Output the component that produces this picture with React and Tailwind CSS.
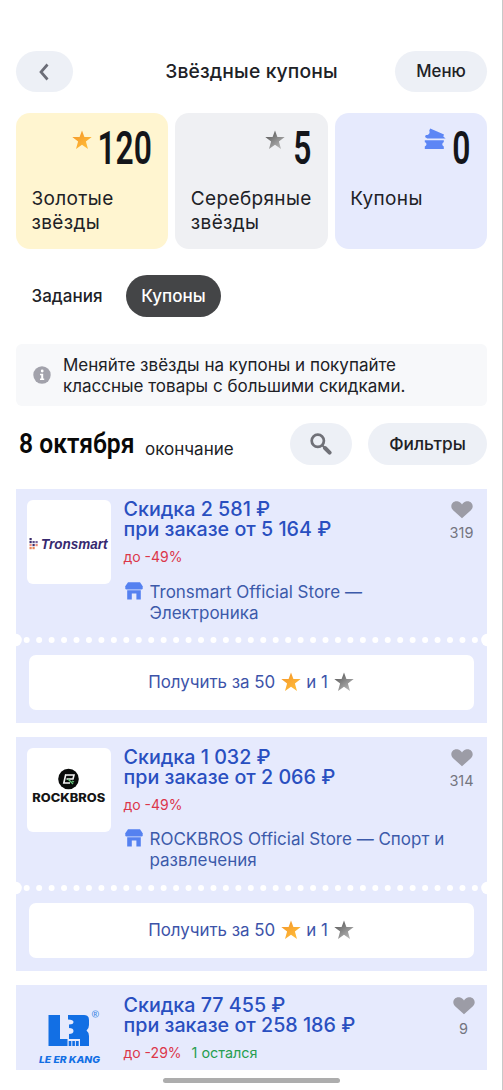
const DOTS = Array.from({ length: 37 }, (_, i) => 10.7 + i * 12.45);

const coupons = [
  {
    id: 1,
    logo: TronsmartLogo,
    discount: 'Скидка 2 581 ₽',
    order: 'при заказе от 5 164 ₽',
    percent: 'до -49%',
    store: ['Tronsmart Official Store —', 'Электроника'],
    likes: 319,
  },
  {
    id: 2,
    logo: RockbrosLogo,
    discount: 'Скидка 1 032 ₽',
    order: 'при заказе от 2 066 ₽',
    percent: 'до -49%',
    store: ['ROCKBROS Official Store — Спорт и', 'развлечения'],
    storeClass: 'mt-[15px]',
    likes: 314,
  },
];

function Star({ gold, className }) {
  const id = gold ? 'star-gold' : 'star-silver';
  return (
    <svg viewBox="0 0 20 20" className={`shrink-0 ${className}`}>
      <defs>
        <linearGradient id={id} x1="0" y1="0" x2="0.8" y2="1">
          <stop offset="0.2" stopColor={gold ? '#f59b2c' : '#626262'} />
          <stop offset="0.9" stopColor={gold ? '#ffba38' : '#b0b0b0'} />
        </linearGradient>
      </defs>
      <path
        fill={`url(#${id})`}
        d="M10 0.4 12.4 7H19.7L13.9 11.5 16 19 10 14.7 4 19 6.1 11.5 0.3 7H7.6Z"
      />
    </svg>
  );
}

function TicketsIcon() {
  return (
    <svg viewBox="0 0 22 22" className="w-[22px] h-[22px] shrink-0" fill="#5d86f5">
      <path d="M6.2 0.6 20 6.6 19.3 8.4 21.6 10.6H3.2L1 8.9 1.8 7C4.2 7.6 6.6 5.2 5.2 2.8Z" />
      <path d="M0.8 12.2H19.8V14.3C17.8 14.8 17.8 17.9 19.8 18.4V21H0.8V18.4C3 17.9 3 14.8 0.8 14.3Z" />
    </svg>
  );
}

function StoreIcon() {
  return (
    <svg viewBox="0 0 18 18" className="w-[18px] h-[18px] shrink-0" fill="#5581f0">
      <path d="M3 0.3H15L17.7 4.2V6.2Q17.7 7.4 16.2 7.4H1.8Q0.3 7.4 0.3 6.2V4.2Z" />
      <path d="M2.2 8.2H15.8V17.5H11.4V11.4H6.8V17.5H2.2Z" />
    </svg>
  );
}

function Heart() {
  return (
    <svg viewBox="0 0 22 18" className="w-[22px] h-[18px]" fill="#9c9ca6">
      <path d="M11 17.3 2.1 9.2C-2.3 4.7 2.2-1.2 7.3 0.6 9 1.1 10.2 2.2 11 3.5 11.8 2.2 13 1.1 14.7 0.6 19.8-1.2 24.3 4.7 19.9 9.2Z" />
    </svg>
  );
}

function TronsmartLogo() {
  const cells = [
    [0, 0, '#3a2d6d'],
    [0, 1, '#3a2d6d'], [1, 1, '#5b4a86'], [2, 1, '#75639a'],
    [0, 2, '#eb8b7c'], [1, 2, '#3a2d6d'], [2, 2, '#eb8b7c'],
    [0, 3, '#e98559'], [1, 3, '#e98559'],
  ];
  return (
    <svg viewBox="0 0 84 84" className="w-full h-full">
      {cells.map(([x, y, color]) => (
        <rect key={`${x}-${y}`} x={2.5 + x * 3} y={38 + y * 3} width="2.2" height="2.2" fill={color} />
      ))}
      <text x="14" y="48.9" textLength="66.5" lengthAdjust="spacingAndGlyphs" fontFamily="Liberation Sans" fontSize="15.3" fontWeight="700" fontStyle="italic" fill="#36296f">Tronsmart</text>
    </svg>
  );
}

function RockbrosLogo() {
  return (
    <svg viewBox="0 0 84 84" className="w-full h-full">
      <circle cx="41.5" cy="31" r="10.3" fill="#090b0a" />
      <path d="M38.3 27H47L46 31H39.5M38.8 26.2 36.8 35H43" fill="none" stroke="#f4f4f4" strokeWidth="1.6" />
      <path d="M41 31 46 36M45 33 47 34" stroke="#69c77b" strokeWidth="1.3" />
      <text x="5.3" y="53.8" textLength="73" lengthAdjust="spacingAndGlyphs" fontFamily="Inter" fontSize="11.2" fontWeight="800" fill="#151515">ROCKBROS</text>
    </svg>
  );
}

function LeErKangLogo() {
  return (
    <svg viewBox="0 0 84 84" className="w-full h-full">
      <g fill="#126fe4">
        <path d="M21.5 19H33V43H40.5V50H21.5Z" />
        <path d="M41 19H57Q62 19 62 24V29Q62 32.5 59.5 34.5Q62 36.5 62 40V50H53V43H42V38Q46.5 38 46.5 35T42 32V28.5Q46.5 28.5 46.5 26T41 23.5Z" />
        <path d="M41.7 45H44.3V50H41.7ZM45.3 45H47.9V50H45.3ZM48.9 45H51.7V50H48.9Z" />
      </g>
      <circle cx="68.5" cy="18" r="3.3" fill="none" stroke="#5f9de9" strokeWidth="0.8" />
      <text x="66.6" y="20" fontFamily="Inter" fontSize="5.3" fontWeight="600" fill="#3f87e4">R</text>
      <text x="12" y="66.6" textLength="61" lengthAdjust="spacingAndGlyphs" fontFamily="Inter" fontSize="9.5" fontWeight="800" fontStyle="italic" fill="#126fe4">LE ER KANG</text>
    </svg>
  );
}

function Balance({ className, icon, value, valueClass, lines }) {
  return (
    <div className={`flex-1 min-w-0 rounded-[14px] px-[15.5px] pt-[15px] ${className}`}>
      <div className="flex justify-end items-start h-[58.5px]">
        {icon}
        <span className={`flex justify-end h-10 shrink-0 ${valueClass}`}>
          <span className="origin-right scale-x-[0.69] font-['Roboto'] font-semibold text-[46px] leading-[40px] text-[#14151a]">{value}</span>
        </span>
      </div>
      <div className="text-[19px] leading-[24px] tracking-[0.35px]">
        {lines.map((line) => (
          <div key={line} className="whitespace-nowrap">{line}</div>
        ))}
      </div>
    </div>
  );
}

function Perforation() {
  return (
    <svg viewBox="0 0 471 14" className="block w-[471px] h-[14px]" fill="#fff">
      <circle cx="-0.5" cy="7" r="6.3" />
      {DOTS.map((x) => (
        <circle key={x} cx={x} cy="7" r="3" />
      ))}
      <circle cx="471.5" cy="7" r="6.3" />
    </svg>
  );
}

function CouponTop({ discount, order, percent, left, likes, likesClass = 'w-[51px]', children }) {
  return (
    <>
      <div className="ml-[13px] -mt-px flex-1 min-w-0">
        <div className="text-[19.7px] leading-[20px] font-medium text-[#294fc0] whitespace-nowrap">
          <div>{discount}</div>
          <div>{order}</div>
        </div>
        <div className="mt-[9px] flex gap-[10px] text-[14px] leading-[18px] text-[#dc364a]">
          <span>{percent}</span>
          {left && <span className="text-[14.4px] text-[#279e50]">{left}</span>}
        </div>
        {children}
      </div>
      <div className={`shrink-0 pt-[1px] flex flex-col items-center text-[14.5px] leading-[18px] text-[#74757f] ${likesClass}`}>
        <Heart />
        <span className="mt-[5px]">{likes}</span>
      </div>
    </>
  );
}

function Coupon({ coupon }) {
  const Logo = coupon.logo;
  return (
    <div className="h-[234px] bg-[#e6eafd]">
      <div className="flex h-[144px] pt-[11px] pl-[10.5px]">
        <div className="w-[84px] h-[84px] shrink-0 rounded-[6px] bg-white">
          <Logo />
        </div>
        <CouponTop {...coupon}>
          <div className={`ml-[1px] flex gap-[7px] text-[17px] leading-[21px] text-[#3c5aaa] ${coupon.storeClass || 'mt-[16px]'}`}>
            <StoreIcon />
            <div className="whitespace-nowrap">
              {coupon.store.map((line) => (
                <div key={line}>{line}</div>
              ))}
            </div>
          </div>
        </CouponTop>
      </div>
      <Perforation />
      <button className="mt-2 mx-[13px] w-[445px] h-[55px] rounded-[7px] bg-white flex items-center justify-center text-[16.9px] text-[#3d53a9]">
        <span>Получить за 50</span>
        <Star gold className="w-5 h-5 mb-[2px] ml-[6px] mr-[5px]" />
        <span>и 1</span>
        <Star className="w-5 h-5 mb-[2px] ml-[6px] mr-[1px]" />
      </button>
    </div>
  );
}

export default function App() {
  return (
    <div className="h-[1090px] w-[503px] overflow-hidden bg-white border-r border-[#c8c8c8] pl-4 pr-[15px] pt-[51px] font-['Inter',sans-serif] text-[#202126]">
      {/* Header */}
      <header className="flex items-center justify-between h-[41px]">
        <button className="w-[57px] h-[41px] pr-[2px] rounded-full bg-[#edf0f6] flex items-center justify-center">
          <svg viewBox="0 0 10 18" className="w-[10px] h-[18px]" fill="none" stroke="#6b6d77" strokeWidth="2.7">
            <path d="M8.5 1.5 2 9 8.5 16.5" />
          </svg>
        </button>
        <h1 className="ml-[35px] mb-[1px] text-[19.3px] tracking-[0.15px] font-medium">Звёздные купоны</h1>
        <button className="w-[92px] h-[41px] rounded-full bg-[#edf0f6] text-[16.8px] font-medium">Меню</button>
      </header>

      {/* Balances */}
      <div className="mt-[21px] h-[136px] flex gap-[7px]">
        <Balance className="bg-[#fff5d0]" icon={<Star gold className="w-5 h-5 mt-[2px] mr-[7px]" />} value="120" valueClass="w-[53px] mr-[1px]" lines={['Золотые', 'звёзды']} />
        <Balance className="bg-[#eff0f3]" icon={<Star className="w-5 h-5 mt-[2px] mr-[8px]" />} value="5" valueClass="w-[18px] mr-[1px]" lines={['Серебряные', 'звёзды']} />
        <Balance className="bg-[#e6eafd]" icon={<TicketsIcon />} value="0" valueClass="w-[24px] mr-[1px]" lines={['Купоны']} />
      </div>

      {/* Tabs */}
      <div className="mt-[26px] flex items-center h-[42px] text-[17px] font-medium">
        <button className="w-[102px] shrink-0 pt-[2px]">Задания</button>
        <button className="ml-[8px] w-[95px] h-[42px] pt-[2px] rounded-full bg-[#444547] text-white">Купоны</button>
      </div>

      {/* Hint */}
      <div className="mt-[27px] h-[62px] rounded-[6px] bg-[#f7f8fa] flex items-center pl-[17px] pt-[1px] text-[17px] leading-[21px]">
        <svg viewBox="0 0 18 18" className="w-[18px] h-[18px] mr-[12px] mb-[2px]">
          <circle cx="9" cy="9" r="8.7" fill="#a2a2ab" />
          <path d="M7 7.8H10.2V12.6H11.2V14H7V12.6H8.2V9.2H7Z" fill="#fff" />
          <circle cx="9.2" cy="5" r="1.4" fill="#fff" />
        </svg>
        <div>
          <div>Меняйте звёзды на купоны и покупайте</div>
          <div>классные товары с большими скидками.</div>
        </div>
      </div>

      {/* Date and filters */}
      <div className="mt-[17px] h-[42px] flex items-center">
        <div className="w-[126px] pl-[3px] whitespace-nowrap">
          <h2 className="w-max origin-left scale-x-[0.88] font-['Roboto'] font-semibold text-[28px] leading-[42px] text-[#090909]">8 октября</h2>
        </div>
        <span className="ml-[3px] mt-[10px] text-[17px] leading-5">окончание</span>
        <button className="ml-auto w-[62px] h-[42px] rounded-full bg-[#edf0f6] flex items-center justify-center">
          <svg viewBox="0 0 22 22" className="w-[22px] h-[22px]" fill="none" stroke="#707178">
            <circle cx="7.8" cy="7.8" r="6.1" strokeWidth="2.7" />
            <path d="M12.2 12.2 14.8 14.8" strokeWidth="2" />
            <path d="M15 15 19.6 19.6" strokeWidth="4" strokeLinecap="round" />
          </svg>
        </button>
        <button className="ml-4 w-[119px] h-[42px] rounded-full bg-[#edf0f6] text-[17.3px] font-medium">Фильтры</button>
      </div>

      {/* Coupons */}
      <div className="mt-6 flex flex-col gap-[14px]">
        {coupons.map((coupon) => (
          <Coupon key={coupon.id} coupon={coupon} />
        ))}
        <div className="h-[85px] bg-[#e6eafd] flex pt-[11px] pl-[10.5px] overflow-hidden">
          <div className="w-[84px] h-[84px] shrink-0">
            <LeErKangLogo />
          </div>
          <CouponTop discount="Скидка 77 455 ₽" order="при заказе от 258 186 ₽" percent="до -29%" left="1 остался" likes={9} likesClass="w-[47px]" />
        </div>
      </div>
      <div className="mt-[8px] mx-auto w-[177px] h-[5px] rounded-full bg-[#adadad]" />
    </div>
  );
}
